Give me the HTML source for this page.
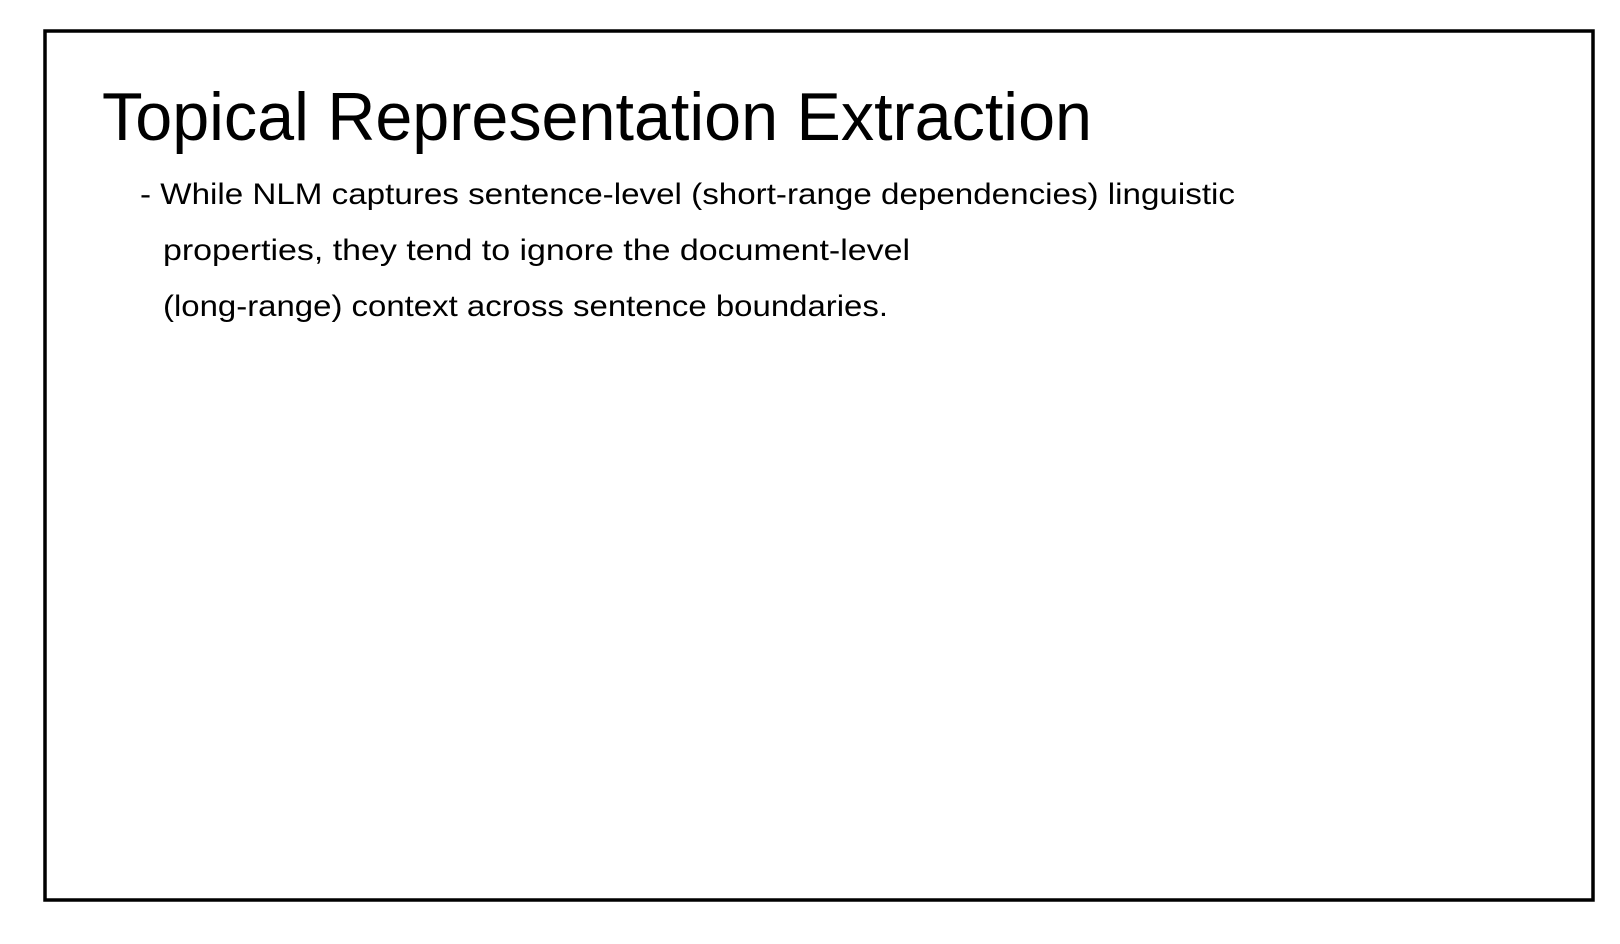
<!DOCTYPE html>
<html><head><meta charset="utf-8"><style>
html,body{margin:0;padding:0;background:#fff;width:1620px;height:944px;overflow:hidden}
svg{display:block}
text{font-family:"Liberation Sans",sans-serif;fill:#000}
</style></head><body>
<svg width="1620" height="944" viewBox="0 0 1620 944">
<rect x="45" y="31" width="1548" height="869" fill="none" stroke="#000" stroke-width="3.5"/>
<text x="102" y="140" font-size="68" textLength="990" lengthAdjust="spacingAndGlyphs">Topical Representation Extraction</text>
<text x="140" y="204" font-size="30" textLength="1095" lengthAdjust="spacingAndGlyphs">- While NLM captures sentence-level (short-range dependencies) linguistic</text>
<text x="163" y="260" font-size="30" textLength="747" lengthAdjust="spacingAndGlyphs">properties, they tend to ignore the document-level</text>
<text x="163" y="316" font-size="30" textLength="725" lengthAdjust="spacingAndGlyphs">(long-range) context across sentence boundaries.</text>
</svg>
</body></html>
